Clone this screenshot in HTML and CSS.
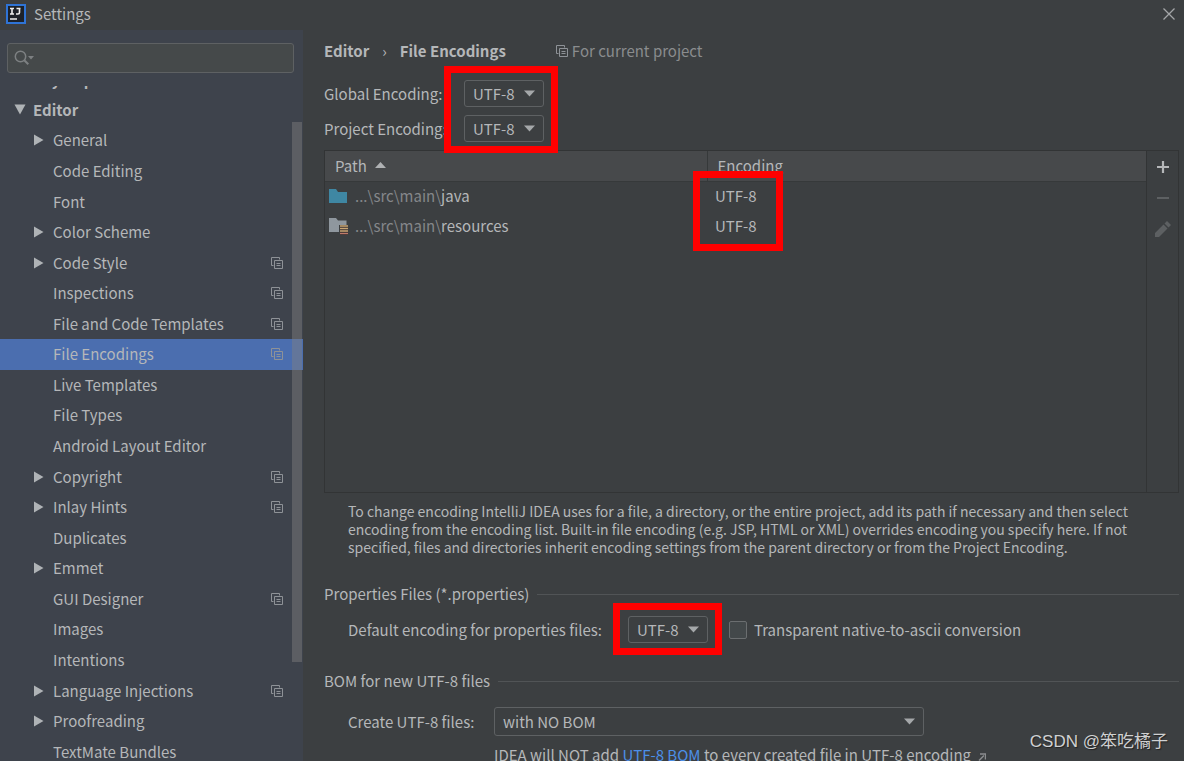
FILE: index.html
```
<!DOCTYPE html>
<html lang="en">
<head>
	<meta charset="utf-8">
	<title>Settings</title>
	<link rel="stylesheet" href="styles.css">
</head>
<body>
	<!-- shared icons -->
	<svg class="sprite" aria-hidden="true">
		<symbol id="copy" viewBox="0 0 12 12">
			<path d="M2.500 8.500h-2v-8h8v2" fill="none" stroke="currentColor"/>
			<path d="M3.500 3.500h8v8h-8z M5.500 6.500h4 M5.500 8.500h4" fill="none" stroke="currentColor"/>
		</symbol>
		<symbol id="right" viewBox="0 0 10 12"><path d="M0 0.500v11l9.500-5.500z" fill="currentColor"/></symbol>
		<symbol id="down" viewBox="0 0 11 7"><path d="M0 0.500h11l-5.500 6z" fill="currentColor"/></symbol>
		<symbol id="open" viewBox="0 0 12 11"><path d="M0.500 0.500h11l-5.500 10z" fill="currentColor"/></symbol>
	</svg>
	<header class="titlebar">
		<svg class="logo" width="20" height="20" viewBox="0 0 20 20">
			<path d="M1 1h18v18H1z" fill="#1d2229" stroke="#2f74d6" stroke-width="2"/>
			<path d="M4 4.500h4 M6 4.500v5.500 M4 10h4 M10.500 4.500h4 M13.500 4.500v4q0 1.500-1.500 1.500h-2 M4 15h7" fill="none" stroke="#eee" stroke-width="1.600"/>
		</svg>
		<h1 class="title">Settings</h1>
		<button class="close" aria-label="Close">
			<svg width="12" height="12" viewBox="0 0 12 12"><path d="M.5 .5l11 11M11.500 .5l-11 11" stroke="currentColor" stroke-width="1.300"/></svg>
		</button>
	</header>
	<div class="window">
		<aside class="sidebar">
			<div class="search">
				<svg width="20" height="16" viewBox="0 0 20 16">
					<circle cx="6.500" cy="6.500" r="5.200" fill="none" stroke="currentColor" stroke-width="1.500"/>
					<path d="M10.300 10.300l4 4" stroke="currentColor" stroke-width="2"/>
					<path d="M14 6h6l-3 3.500z" fill="currentColor"/>
				</svg>
				<input type="text" class="search-input" aria-label="Search settings">
			</div>
			<nav class="tree">
				<ul class="nodes">
					<li class="node node--top"><a href="#">Keymap</a></li>
					<li class="node node--top"><svg class="arrow arrow--open"><use href="#open"/></svg><a href="#">Editor</a></li>
					<li class="node"><svg class="arrow"><use href="#right"/></svg><a href="#">General</a></li>
					<li class="node"><a href="#">Code Editing</a></li>
					<li class="node"><a href="#">Font</a></li>
					<li class="node"><svg class="arrow"><use href="#right"/></svg><a href="#">Color Scheme</a></li>
					<li class="node"><svg class="arrow"><use href="#right"/></svg><a href="#">Code Style</a><svg class="copy"><use href="#copy"/></svg></li>
					<li class="node"><a href="#">Inspections</a><svg class="copy"><use href="#copy"/></svg></li>
					<li class="node"><a href="#">File and Code Templates</a><svg class="copy"><use href="#copy"/></svg></li>
					<li class="node node--active"><a href="#">File Encodings</a><svg class="copy"><use href="#copy"/></svg></li>
					<li class="node"><a href="#">Live Templates</a></li>
					<li class="node"><a href="#">File Types</a></li>
					<li class="node"><a href="#">Android Layout Editor</a></li>
					<li class="node"><svg class="arrow"><use href="#right"/></svg><a href="#">Copyright</a><svg class="copy"><use href="#copy"/></svg></li>
					<li class="node"><svg class="arrow"><use href="#right"/></svg><a href="#">Inlay Hints</a><svg class="copy"><use href="#copy"/></svg></li>
					<li class="node"><a href="#">Duplicates</a></li>
					<li class="node"><svg class="arrow"><use href="#right"/></svg><a href="#">Emmet</a></li>
					<li class="node"><a href="#">GUI Designer</a><svg class="copy"><use href="#copy"/></svg></li>
					<li class="node"><a href="#">Images</a></li>
					<li class="node"><a href="#">Intentions</a></li>
					<li class="node"><svg class="arrow"><use href="#right"/></svg><a href="#">Language Injections</a><svg class="copy"><use href="#copy"/></svg></li>
					<li class="node"><svg class="arrow"><use href="#right"/></svg><a href="#">Proofreading</a></li>
					<li class="node"><a href="#">TextMate Bundles</a></li>
				</ul>
				<div class="scrollbar"></div>
			</nav>
		</aside>
		<main class="content">
			<div class="crumbs">
				<b>Editor</b><span class="sep">›</span><b>File Encodings</b>
				<span class="scope"><svg class="copy"><use href="#copy"/></svg>For current project</span>
			</div>
			<div class="encodings">
				<label for="global">Global Encoding:</label>
				<div class="combo">
					<select id="global"><option>UTF-8</option></select>
					<svg class="caret"><use href="#down"/></svg>
				</div>
				<label for="project">Project Encoding:</label>
				<div class="combo">
					<select id="project"><option>UTF-8</option></select>
					<svg class="caret"><use href="#down"/></svg>
				</div>
				<div class="mark mark--combos"></div>
			</div>
			<div class="panel">
				<div class="paths">
					<table>
						<thead>
							<tr>
								<th class="col-path">Path <svg class="sort" width="11" height="6" viewBox="0 0 11 6"><path d="M0 6h11l-5.500-6z" fill="currentColor"/></svg></th>
								<th>Encoding</th>
							</tr>
						</thead>
						<tbody>
							<tr>
								<td><div class="path">
									<svg width="20" height="18" viewBox="0 0 20 18"><path d="M0 2h7l2 3h9v11H0z" fill="#3f87a3"/></svg>
									<span class="dim">...\src\main\</span>java
								</div></td>
								<td>UTF-8</td>
							</tr>
							<tr>
								<td><div class="path">
									<svg width="20" height="18" viewBox="0 0 20 18">
										<path d="M0 1h7l2 2.500h8.500V8H10v7H0z" fill="#8f979e"/>
										<path d="M11 8h8v10h-8z" fill="#3b3233"/>
										<path d="M11 9h8M11 11.500h8M11 14h8" stroke="#c9a673" stroke-width="1.300"/>
										<path d="M11 16.500h8" stroke="#c07a68" stroke-width="1.300"/>
									</svg>
									<span class="dim">...\src\main\</span>resources
								</div></td>
								<td>UTF-8</td>
							</tr>
						</tbody>
					</table>
					<div class="mark mark--cells"></div>
				</div>
				<div class="tools">
					<button class="tool" aria-label="Add"><svg width="14" height="14" viewBox="0 0 14 14"><path d="M7 1v12M1 7h12" stroke="currentColor" stroke-width="2.200"/></svg></button>
					<button class="tool" aria-label="Remove" disabled><svg width="14" height="14" viewBox="0 0 14 14"><path d="M1 7h12" stroke="currentColor" stroke-width="2"/></svg></button>
					<button class="tool" aria-label="Edit" disabled><svg width="16" height="16" viewBox="0 0 16 16"><path d="M0 16v-4l8.500-8.500 4 4L4 16z M9.500 2.500L12 0l4 4-2.500 2.500z" fill="currentColor"/></svg></button>
				</div>
			</div>
			<p class="help">To change encoding IntelliJ IDEA uses for a file, a directory, or the entire project, add its path if necessary and then select encoding from the encoding list. Built-in file encoding (e.g. JSP, HTML or XML) overrides encoding you specify here. If not specified, files and directories inherit encoding settings from the parent directory or from the Project Encoding.</p>
			<h2 class="group">Properties Files (*.properties)</h2>
			<div class="row">
				<label for="props">Default encoding for properties files:</label>
				<div class="combo combo--marked">
					<select id="props"><option>UTF-8</option></select>
					<svg class="caret"><use href="#down"/></svg>
					<div class="mark mark--props"></div>
				</div>
				<label class="check"><input type="checkbox"> Transparent native-to-ascii conversion</label>
			</div>
			<h2 class="group">BOM for new UTF-8 files</h2>
			<div class="bom">
				<label for="bom">Create UTF-8 files:</label>
				<div class="combo combo--wide">
					<select id="bom"><option>with NO BOM</option></select>
					<svg class="caret"><use href="#down"/></svg>
				</div>
				<p class="note">IDEA will NOT add <a href="#">UTF-8 BOM</a> to every created file in UTF-8 encoding <svg class="external" width="8" height="8" viewBox="0 0 8 8"><path d="M1 7.500l5-5M2 1h5.500v5.500" fill="none" stroke="currentColor" stroke-width="1.500"/></svg></p>
			</div>
		</main>
	</div>
	<div class="watermark">CSDN @笨吃橘子</div>
</body>
</html>
```
FILE: styles.css
```
* {
	box-sizing: border-box;
}

body {
	display: flex;
	flex-direction: column;
	height: 100vh;
	margin: 0;
	overflow: hidden;
	background: #3c3f41;
	color: #b5b7b9;
	font-family: "Noto Sans CJK SC", "Noto Sans", sans-serif;
	font-size: 15px;
	line-height: 20px;
}

h1, h2, p, ul {
	margin: 0;
	padding: 0;
	font-size: 15px;
	font-weight: normal;
	list-style: none;
}

button {
	padding: 0;
	border: none;
	background: none;
	color: inherit;
}

svg {
	flex: none;
}

.sprite {
	position: absolute;
	width: 0;
	height: 0;
}

.titlebar {
	display: flex;
	align-items: center;
	height: 30px;
	padding: 0 9px 2px 6px;
}

.title {
	flex: 1;
	margin-left: 8px;
}

.close {
	display: flex;
	color: #a4a6a8;
}

.window {
	display: flex;
	flex: 1;
	min-height: 0;
}

/* left tree */
.sidebar {
	display: flex;
	flex-direction: column;
	width: 303px;
	background: #3e434c;
}

.search {
	display: flex;
	align-items: center;
	height: 30px;
	margin: 13px 9px 13px 7px;
	padding-left: 6px;
	border: 1px solid #5e6163;
	border-radius: 3px;
	background: #45494a;
	color: #7d8082;
}

.search-input {
	flex: 1;
	min-width: 0;
	border: none;
	outline: none;
	background: none;
	color: #bbb;
}

.tree {
	position: relative;
	flex: 1;
	min-height: 0;
	overflow: hidden;
}

/* list is scrolled a little, first row is cut */
.nodes {
	display: grid;
	grid-auto-rows: 1fr;
	height: calc(100% + 28px);
	margin-top: -22px;
}

.node {
	display: flex;
	align-items: center;
	padding: 0 20px 0 34px;
}

.node a {
	flex: 1;
	color: inherit;
	text-decoration: none;
}

.node a:first-child {
	margin-left: 19px;
}

.node--top {
	padding-left: 14px;
	font-weight: bold;
}

.node--active {
	background: #4b6eaf;
}

.arrow {
	width: 10px;
	height: 12px;
	margin-right: 9px;
	color: #afb3b6;
}

.arrow--open {
	width: 12px;
	height: 11px;
	margin-right: 7px;
}

.copy {
	width: 12px;
	height: 12px;
	color: #8e9297;
}

.scrollbar {
	position: absolute;
	top: 36px;
	right: 1px;
	width: 10px;
	height: 80%;
	background: rgba(128, 128, 128, .45);
}

/* right side */
.content {
	display: flex;
	flex: 1;
	flex-direction: column;
	min-width: 0;
	margin-bottom: -4px;
	padding: 11px 5px 0 21px;
}

.crumbs {
	display: flex;
	align-items: center;
}

.sep {
	margin: 0 13px;
}

.scope {
	display: flex;
	align-items: center;
	gap: 4px;
	margin-left: 50px;
	color: #8a8c8e;
}

.encodings {
	position: relative;
	display: grid;
	grid-template-columns: 140px 80px;
	grid-auto-rows: 27px;
	align-items: center;
	gap: 8px 0;
	margin-top: 19px;
}

.combo {
	position: relative;
	display: grid;
	align-items: center;
	width: 80px;
	height: 27px;
}

.combo select {
	grid-area: 1 / 1;
	width: 100%;
	height: 100%;
	padding: 0 8px;
	border: 1px solid #5e6163;
	border-radius: 3px;
	appearance: none;
	background: none;
	color: inherit;
	font: inherit;
}

.caret {
	grid-area: 1 / 1;
	justify-self: end;
	width: 11px;
	height: 7px;
	margin-right: 9px;
	color: #a5a8aa;
	pointer-events: none;
}

.combo--wide {
	width: 430px;
	height: 29px;
}

/* red frames */
.mark {
	position: absolute;
	z-index: 1;
	border: 7px solid #f00;
	pointer-events: none;
}

.mark--combos {
	top: -14px;
	left: 120px;
	width: 114px;
	height: 87px;
}

.mark--cells {
	top: 20px;
	left: 368px;
	width: 90px;
	height: 80px;
}

.mark--props {
	top: -13px;
	left: -15px;
	width: 109px;
	height: 52px;
}

.panel {
	display: flex;
	flex: 1;
	margin-top: 8px;
	border: 1px solid #323435;
}

.paths {
	position: relative;
	flex: 1;
	border-right: 1px solid #323435;
}

table {
	width: 100%;
	border-collapse: collapse;
	table-layout: fixed;
}

th {
	height: 30px;
	padding: 0 10px;
	border-bottom: 1px solid #36393a;
	background: #47494b;
	font-weight: normal;
	text-align: left;
}

.col-path {
	width: 382px;
	border-right: 1px solid #36393a;
}

.sort {
	margin: 0 0 4px 5px;
	color: #afb1b3;
}

td {
	height: 30px;
	padding: 0 8px;
}

td:first-child {
	padding: 0 4px;
}

.path {
	display: flex;
	align-items: center;
}

.dim {
	margin-left: 6px;
	color: #85878a;
}

.tools {
	display: flex;
	flex-direction: column;
	width: 31px;
}

.tool {
	display: grid;
	place-items: center;
	height: 31px;
}

.tool:disabled {
	color: #5d6062;
}

.help {
	margin: 9px 40px 0 24px;
	font-size: 14px;
	line-height: 18px;
}

.group {
	display: flex;
	align-items: center;
	gap: 8px;
	margin-top: 28px;
}

.group::after {
	flex: 1;
	height: 1px;
	background: #515456;
	content: "";
}

.row {
	display: flex;
	align-items: center;
	margin: 12px 0 0 24px;
}

.combo--marked {
	margin: 0 21px 0 26px;
}

.check {
	display: flex;
	align-items: center;
	gap: 7px;
}

.check input {
	width: 18px;
	height: 18px;
	margin: 0;
	border: 1px solid #6b6e70;
	border-radius: 2px;
	appearance: none;
	background: #43484a;
}

.bom {
	display: grid;
	grid-template-columns: 146px 1fr;
	align-items: center;
	margin: 16px 0 0 24px;
}

.note {
	grid-column: 2;
	margin-top: 9px;
}

.note a {
	color: #4c8fe8;
	text-decoration: none;
}

.external {
	margin-left: 4px;
	color: #8a8c8e;
}

.watermark {
	position: absolute;
	right: 16px;
	bottom: 7px;
	color: #d0d1d2;
	font: 17px/24px "Liberation Sans", "Noto Sans CJK SC", sans-serif;
	text-shadow: 1px 1px 1px #222;
}
```
